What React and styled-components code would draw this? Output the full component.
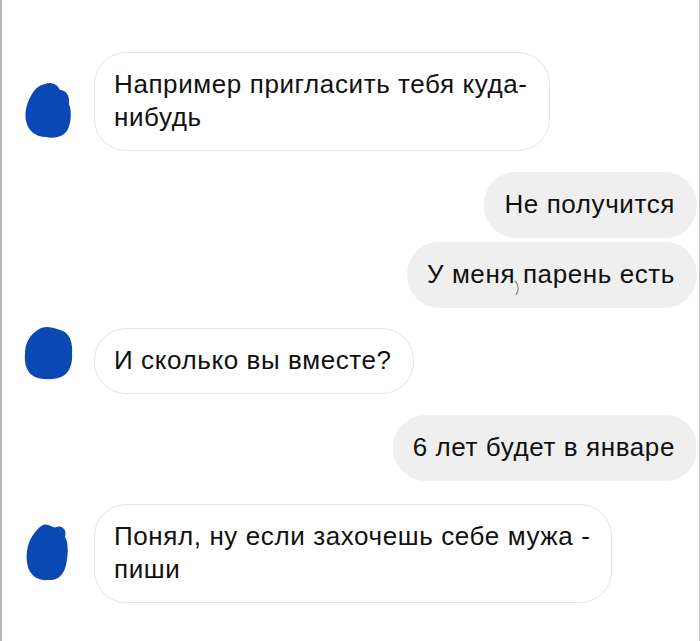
import React from 'react'
import styled, { createGlobalStyle } from 'styled-components'

const Global = createGlobalStyle`
  html, body {
    margin: 0;
    padding: 0;
    background: #ffffff;
  }
`

const Screen = styled.div`
  width: 700px;
  height: 641px;
  box-sizing: border-box;
  border-left: 2px solid #b4b4b4;
  border-right: 1px solid #c8c8c8;
  background: #ffffff;
  overflow: hidden;
  padding-top: 52px;
  display: flex;
  flex-direction: column;
  font-family: "Liberation Sans", Arial, sans-serif;
  color: #111111;
`

const Row = styled.div`
  display: flex;
  align-items: center;
  justify-content: ${p => (p.$out ? 'flex-end' : 'flex-start')};
  gap: 20px;
  padding-left: ${p => (p.$out ? '0' : '20px')};
  padding-right: ${p => (p.$out ? '2px' : '0')};
  margin-top: ${p => p.$gap || 0}px;
`

const Bubble = styled.div`
  box-sizing: border-box;
  font-size: 26px;
  letter-spacing: 0.6px;
  line-height: 33px;
  white-space: nowrap;
  padding: 15px 21px 16px 19px;
  border-radius: 32px;
  background: ${p => (p.$out ? '#efefef' : '#ffffff')};
  border: 1px solid ${p => (p.$out ? '#efefef' : '#e4e4e4')};
  position: relative;
`

const Scratch = styled.svg`
  position: absolute;
  left: 105px;
  top: 36px;
  width: 8px;
  height: 18px;
`

const Blob = styled.svg`
  flex: none;
  width: 52px;
  height: 58px;
  margin-top: ${p => p.$shift || 0}px;
`

const blobs = {
  a: 'M22 3 C30 0 35 5 37 9 C43 9 47 15 46 23 C49 30 48 42 45 48 C41 56 31 58 23 56 C13 56 5 50 3 40 C1 30 5 18 11 10 C14 6 17 4 22 3 Z',
  b: 'M18 2 C26 -1 34 3 40 5 C47 8 50 18 49 27 C50 38 46 48 38 51 C30 54 20 54 12 51 C4 47 1 38 2 28 C2 18 6 8 18 2 Z',
  c: 'M20 2 C26 0 30 6 34 4 C40 2 44 8 42 14 C46 20 45 34 43 42 C41 52 34 58 26 57 C16 58 8 54 5 44 C2 34 4 20 10 12 C13 8 16 4 20 2 Z',
}

const Avatar = ({ kind, shift }) => (
  <Blob viewBox="0 0 50 58" $shift={shift}>
    <path d={blobs[kind]} fill="#0a48b4" />
  </Blob>
)

export default function App() {
  return (
    <Screen>
      <Global />
      <Row>
        <Avatar kind="a" shift={16} />
        <Bubble>
          Например пригласить тебя куда-
          <br />
          нибудь
        </Bubble>
      </Row>
      <Row $out $gap={21}>
        <Bubble $out>Не получится</Bubble>
      </Row>
      <Row $out $gap={4}>
        <Bubble $out>
          У меня парень есть
          <Scratch viewBox="0 0 8 18">
            <path d="M2 2 C6 6 6 12 3 16" stroke="#8a8a8a" strokeWidth="1.2" fill="none" />
          </Scratch>
        </Bubble>
      </Row>
      <Row $gap={20}>
        <Avatar kind="b" shift={-13} />
        <Bubble>И сколько вы вместе?</Bubble>
      </Row>
      <Row $out $gap={21}>
        <Bubble $out>6 лет будет в январе</Bubble>
      </Row>
      <Row $gap={23}>
        <Avatar kind="c" shift={-4} />
        <Bubble>
          Понял, ну если захочешь себе мужа -
          <br />
          пиши
        </Bubble>
      </Row>
    </Screen>
  )
}
